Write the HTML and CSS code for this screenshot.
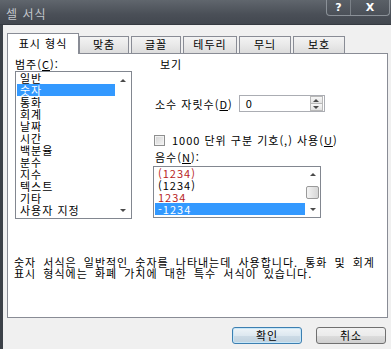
FILE: index.html
```html
<!DOCTYPE html>
<html lang="ko">
<head>
<meta charset="utf-8">
<title>셀 서식</title>
<link rel="stylesheet" href="styles.css">
</head>
<body>
<div class="win">
  <div class="titlebar">
    <span class="title">셀 서식</span>
    <div class="capbtns">
      <span class="cap help">?</span>
      <span class="cap close">X</span>
    </div>
  </div>
  <div class="body">
    <div class="tabs">
      <div class="tab active">표시 형식</div>
      <div class="tab w50 first">맞춤</div>
      <div class="tab w50">글꼴</div>
      <div class="tab w54">테두리</div>
      <div class="tab w52">무늬</div>
      <div class="tab w52">보호</div>
    </div>
    <div class="panel">
      <div class="top">
        <div class="left">
          <div class="lbl">범주(<u>C</u>):</div>
          <div class="list cat">
            <div class="items">
              <div class="item">일반</div>
              <div class="item sel">숫자</div>
              <div class="item">통화</div>
              <div class="item">회계</div>
              <div class="item">날짜</div>
              <div class="item">시간</div>
              <div class="item">백분율</div>
              <div class="item">분수</div>
              <div class="item">지수</div>
              <div class="item">텍스트</div>
              <div class="item">기타</div>
              <div class="item">사용자 지정</div>
            </div>
            <div class="vscroll">
              <span class="sbtn"><span class="arr up"></span></span>
              <span class="sbtn"><span class="arr dn"></span></span>
            </div>
          </div>
        </div>
        <div class="right">
          <div class="lbl view">보기</div>
          <div class="row dec">
            <span class="lbl pad">소수 자릿수(<u>D</u>)</span>
            <div class="spin">
              <span class="val">0</span>
              <div class="spinbtns">
                <span class="sp"><span class="arr up"></span></span>
                <span class="sp"><span class="arr dn"></span></span>
              </div>
            </div>
          </div>
          <div class="row chk">
            <span class="box"></span>
            <span class="lbl">1000 단위 구분 기호(,) 사용(<u>U</u>)</span>
          </div>
          <div class="lbl pad neglbl">음수(<u>N</u>):</div>
          <div class="list negs">
            <div class="items">
              <div class="item red">(1234)</div>
              <div class="item">(1234)</div>
              <div class="item red">1234</div>
              <div class="item sel">-1234</div>
            </div>
            <div class="vscroll narrow">
              <span class="sbtn short"><span class="arr up"></span></span>
              <span class="thumb"></span>
              <span class="sbtn short"><span class="arr dn"></span></span>
            </div>
          </div>
        </div>
      </div>
      <p class="desc">숫자 서식은 일반적인 숫자를 나타내는데 사용합니다. 통화 및 회계<br>표시 형식에는 화폐 가치에 대한 특수 서식이 있습니다.</p>
    </div>
    <div class="btns">
      <button class="btn ok">확인</button>
      <button class="btn">취소</button>
    </div>
  </div>
</div>
</body>
</html>
```
FILE: styles.css
```css
html, body {
  margin: 0;
  padding: 0;
}
body {
  width: 391px;
  height: 349px;
  overflow: hidden;
  background: #f0f0f0;
  font-family: "Noto Sans CJK KR", "Noto Sans", sans-serif;
  font-size: 11px;
  letter-spacing: 1px;
  color: #000;
}
u { text-decoration: underline; text-underline-offset: 1px; }

.win {
  display: flex;
  flex-direction: column;
  height: 349px;
}

/* title bar */
.titlebar {
  height: 24px;
  border-bottom: 1px solid #353a41;
  background: linear-gradient(#60666d, #4a4f57 60%, #42474f);
  display: flex;
  align-items: flex-start;
}
.title {
  margin: 7px 0 0 6px;
  color: #c3c7cc;
  font-size: 12px;
  line-height: 14px;
  letter-spacing: 1px;
}
.capbtns {
  margin-left: auto;
  margin-right: 1px;
  display: flex;
  width: 64px;
  height: 16px;
  box-sizing: border-box;
  border: 1px solid #8b9198;
  border-top: none;
  border-radius: 0 0 4px 4px;
  background: linear-gradient(#5a6067, #4b5058);
}
.cap {
  display: flex;
  align-items: center;
  justify-content: center;
  color: #fff;
  font-family: "DejaVu Sans", sans-serif;
  font-weight: bold;
  font-size: 11px;
  line-height: 14px;
  letter-spacing: 0;
}
.help {
  width: 23px;
  border-right: 1px solid #7b8188;
}
.close { flex: 1; }

/* body */
.body {
  flex: 1;
  border-left: 3px solid #3c4148;
  padding: 8px 3px 0 4px;
}

/* tabs */
.tabs {
  display: flex;
  align-items: flex-end;
  height: 20px;
}
.tab {
  box-sizing: border-box;
  height: 17px;
  border: 1px solid #898c95;
  border-bottom: none;
  background: linear-gradient(#f3f3f3, #e9e9e9 50%, #dcdcdc);
  text-align: center;
  line-height: 15px;
  margin-left: 2px;
}
.tab.first { margin-left: 0; }
.tab.active {
  width: 72px;
  height: 21px;
  margin: 0 0 -1px 0;
  background: #fff;
  line-height: 19px;
  position: relative;
  z-index: 1;
}
.w50 { width: 50px; }
.w52 { width: 52px; }
.w54 { width: 54px; }

/* panel */
.panel {
  box-sizing: border-box;
  height: 265px;
  border: 1px solid #898c95;
  background: #fff;
  padding: 3px 0 0 7px;
}
.top { display: flex; }
.left { width: 117px; }
.lbl { line-height: 14px; white-space: nowrap; }

.list {
  box-sizing: border-box;
  border: 1px solid #828790;
  background: #fff;
  display: flex;
}
.cat { height: 148px; }
.items {
  flex: 1;
  padding: 0 0 0 1px;
}
.item {
  line-height: 12px;
  height: 12px;
  padding-left: 3px;
  white-space: nowrap;
}
.item.sel {
  background: #3399ff;
  color: #fff;
}
.item.red { color: #b81d1d; }

.vscroll {
  width: 16px;
  display: flex;
  flex-direction: column;
  justify-content: space-between;
  align-items: center;
}
.vscroll.narrow { width: 15px; }
.sbtn {
  width: 100%;
  height: 16px;
  display: flex;
  align-items: center;
  justify-content: center;
}
.sbtn.short { height: 15px; }
.thumb {
  box-sizing: border-box;
  width: 13px;
  height: 13px;
  border: 1px solid #9a9a9a;
  border-radius: 2px;
  background: linear-gradient(90deg, #f4f4f4, #e4e4e4 50%, #d6d6d6);
}
.arr {
  width: 0;
  height: 0;
  border-left: 3px solid transparent;
  border-right: 3px solid transparent;
}
.arr.up { border-bottom: 3px solid #4a4a4a; }
.arr.dn { border-top: 3px solid #4a4a4a; }

/* right column */
.right {
  margin-left: 21px;
  flex: 1;
}
.view { margin-left: 7px; }
.pad { padding-left: 2px; }
.row {
  display: flex;
  align-items: center;
}
.dec {
  margin-top: 24px;
  height: 17px;
}
.spin {
  box-sizing: border-box;
  width: 86px;
  height: 17px;
  margin-left: 6px;
  border: 1px solid #abadb3;
  display: flex;
  background: #fff;
}
.val {
  flex: 1;
  padding-left: 6px;
  line-height: 15px;
}
.spinbtns {
  width: 13px;
  display: flex;
  flex-direction: column;
  margin: 0 1px 0 0;
}
.sp {
  flex: 1;
  box-sizing: border-box;
  border: 1px solid #b9b9b9;
  background: linear-gradient(#f7f7f7, #e2e2e2);
  display: flex;
  align-items: center;
  justify-content: center;
}
.sp + .sp { border-top: none; }

.chk {
  margin-top: 21px;
  height: 14px;
}
.box {
  box-sizing: border-box;
  width: 11px;
  height: 11px;
  margin-left: 1px;
  margin-right: 7px;
  border: 1px solid #8e8f8f;
  background: linear-gradient(135deg, #d4d4d4, #f4f4f4);
  box-shadow: inset 0 0 0 1px #f2f2f2;
}
.neglbl { margin-top: 3px; }
.negs {
  margin-top: 2px;
  width: 168px;
  height: 52px;
}

.desc {
  margin: 38px 0 0 -1px;
  line-height: 11px;
  white-space: nowrap;
  word-spacing: 3px;
}

/* buttons */
.btns {
  display: flex;
  justify-content: flex-end;
  gap: 14px;
  margin-top: 9px;
  padding-right: 2px;
}
.btn {
  box-sizing: border-box;
  width: 70px;
  height: 17px;
  padding: 0;
  border: 1px solid #707070;
  border-radius: 3px;
  background: linear-gradient(#f2f2f2, #ebebeb 50%, #dddddd 51%, #cfcfcf);
  font-family: "Noto Sans CJK KR", "Noto Sans", sans-serif;
  font-size: 11px;
  letter-spacing: 1px;
  line-height: 15px;
  color: #000;
}
.btn.ok {
  border-color: #3c7fb1;
  box-shadow: inset 0 0 0 1px #c6e6f8;
  background: linear-gradient(#eef4f8, #dde8f0 50%, #cddbe6 51%, #c0d2df);
}
```
